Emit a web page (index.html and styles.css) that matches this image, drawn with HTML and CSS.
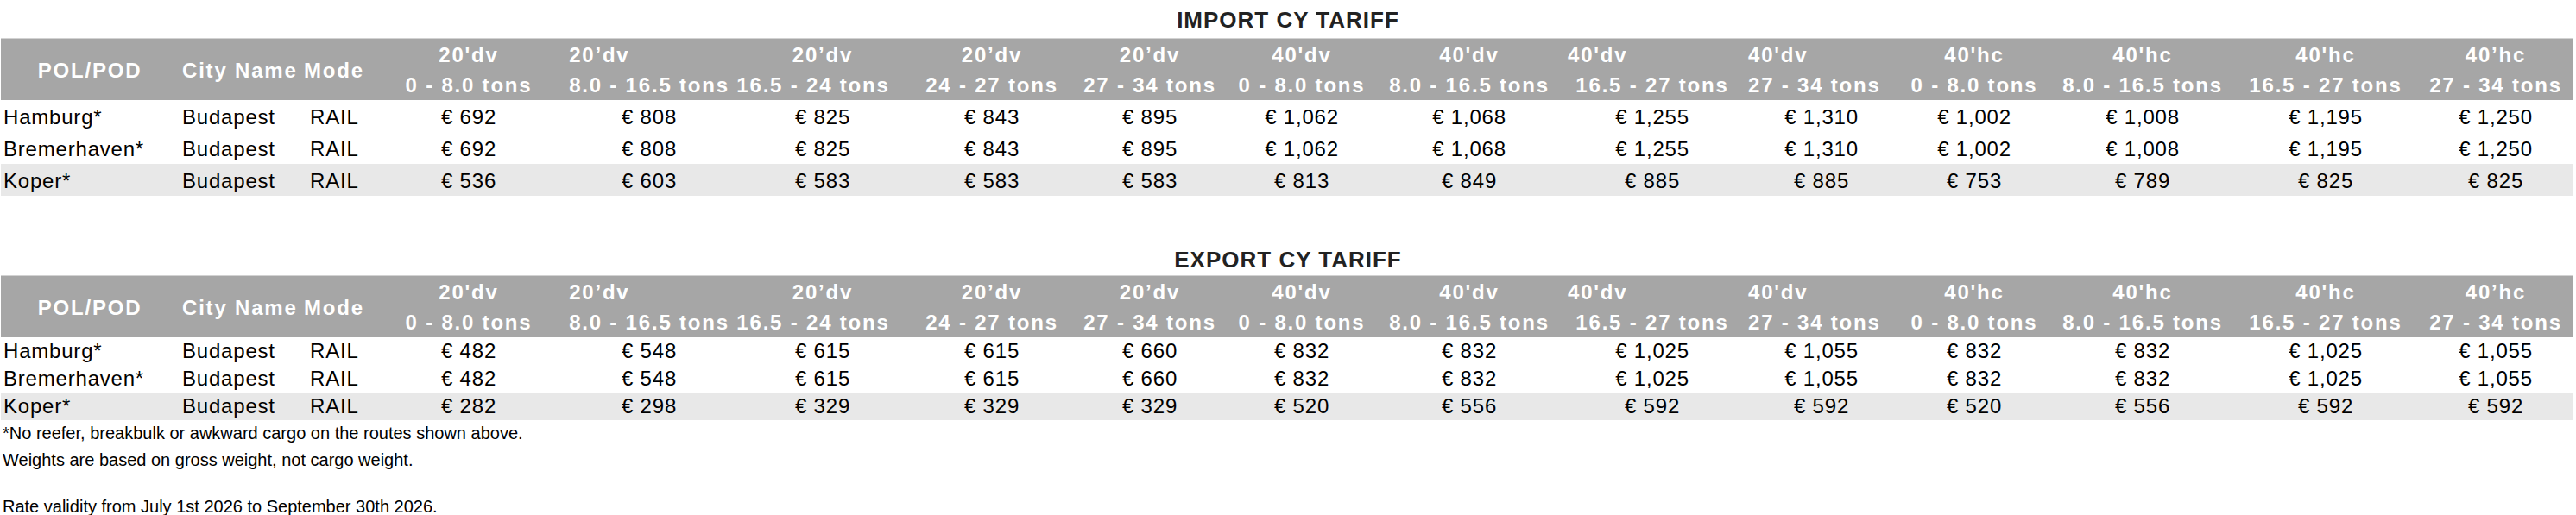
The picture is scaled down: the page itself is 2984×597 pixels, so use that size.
FILE: index.html
```html
<!DOCTYPE html>
<html lang="en">
<head>
<meta charset="utf-8">
<title>CY Tariff</title>
<link rel="stylesheet" href="styles.css">
</head>
<body>
<section class="tariff import">
  <h1 class="title">IMPORT CY TARIFF</h1>
  <table class="rates">
    <colgroup>
      <col class="c-port"><col class="c-city"><col class="c-mode">
      <col class="w212"><col class="w206"><col class="w196"><col class="w196"><col class="w170">
      <col class="w182"><col class="w206"><col class="w218"><col class="w174">
      <col class="w180"><col class="w210"><col class="w214"><col class="w180">
    </colgroup>
    <thead>
      <tr>
        <th class="single">POL/POD</th>
        <th class="single th-city">City Name</th>
        <th class="single th-mode">Mode</th>
        <th><span class="hl">20'dv</span><span class="hl">0 - 8.0 tons</span></th>
        <th><span class="stack"><span class="hl">20’dv</span><span class="hl">8.0 - 16.5 tons</span></span></th>
        <th><span class="hl">20’dv</span><span class="hl"><span class="nudge">16.5 - 24 tons</span></span></th>
        <th><span class="hl">20’dv</span><span class="hl">24 - 27 tons</span></th>
        <th><span class="hl">20’dv</span><span class="hl">27 - 34 tons</span></th>
        <th><span class="hl">40'dv</span><span class="hl">0 - 8.0 tons</span></th>
        <th><span class="hl">40'dv</span><span class="hl">8.0 - 16.5 tons</span></th>
        <th><span class="hl hl-left">40'dv</span><span class="hl">16.5 - 27 tons</span></th>
        <th class="th-left"><span class="hl">40'dv</span><span class="hl">27 - 34 tons</span></th>
        <th><span class="hl">40'hc</span><span class="hl">0 - 8.0 tons</span></th>
        <th><span class="hl">40'hc</span><span class="hl">8.0 - 16.5 tons</span></th>
        <th><span class="hl">40'hc</span><span class="hl">16.5 - 27 tons</span></th>
        <th><span class="hl">40’hc</span><span class="hl">27 - 34 tons</span></th>
      </tr>
    </thead>
    <tbody>
      <tr>
        <td class="port">Hamburg*</td><td class="city">Budapest</td><td class="mode">RAIL</td>
        <td>€ 692</td><td>€ 808</td><td>€ 825</td><td>€ 843</td><td>€ 895</td>
        <td>€ 1,062</td><td>€ 1,068</td><td>€ 1,255</td><td>€ 1,310</td>
        <td>€ 1,002</td><td>€ 1,008</td><td>€ 1,195</td><td>€ 1,250</td>
      </tr>
      <tr>
        <td class="port">Bremerhaven*</td><td class="city">Budapest</td><td class="mode">RAIL</td>
        <td>€ 692</td><td>€ 808</td><td>€ 825</td><td>€ 843</td><td>€ 895</td>
        <td>€ 1,062</td><td>€ 1,068</td><td>€ 1,255</td><td>€ 1,310</td>
        <td>€ 1,002</td><td>€ 1,008</td><td>€ 1,195</td><td>€ 1,250</td>
      </tr>
      <tr class="shade">
        <td class="port">Koper*</td><td class="city">Budapest</td><td class="mode">RAIL</td>
        <td>€ 536</td><td>€ 603</td><td>€ 583</td><td>€ 583</td><td>€ 583</td>
        <td>€ 813</td><td>€ 849</td><td>€ 885</td><td>€ 885</td>
        <td>€ 753</td><td>€ 789</td><td>€ 825</td><td>€ 825</td>
      </tr>
    </tbody>
  </table>
</section>

<section class="tariff export">
  <h1 class="title">EXPORT CY TARIFF</h1>
  <table class="rates">
    <colgroup>
      <col class="c-port"><col class="c-city"><col class="c-mode">
      <col class="w212"><col class="w206"><col class="w196"><col class="w196"><col class="w170">
      <col class="w182"><col class="w206"><col class="w218"><col class="w174">
      <col class="w180"><col class="w210"><col class="w214"><col class="w180">
    </colgroup>
    <thead>
      <tr>
        <th class="single">POL/POD</th>
        <th class="single th-city">City Name</th>
        <th class="single th-mode">Mode</th>
        <th><span class="hl">20'dv</span><span class="hl">0 - 8.0 tons</span></th>
        <th><span class="stack"><span class="hl">20’dv</span><span class="hl">8.0 - 16.5 tons</span></span></th>
        <th><span class="hl">20’dv</span><span class="hl"><span class="nudge">16.5 - 24 tons</span></span></th>
        <th><span class="hl">20’dv</span><span class="hl">24 - 27 tons</span></th>
        <th><span class="hl">20’dv</span><span class="hl">27 - 34 tons</span></th>
        <th><span class="hl">40'dv</span><span class="hl">0 - 8.0 tons</span></th>
        <th><span class="hl">40'dv</span><span class="hl">8.0 - 16.5 tons</span></th>
        <th><span class="hl hl-left">40'dv</span><span class="hl">16.5 - 27 tons</span></th>
        <th class="th-left"><span class="hl">40'dv</span><span class="hl">27 - 34 tons</span></th>
        <th><span class="hl">40'hc</span><span class="hl">0 - 8.0 tons</span></th>
        <th><span class="hl">40'hc</span><span class="hl">8.0 - 16.5 tons</span></th>
        <th><span class="hl">40'hc</span><span class="hl">16.5 - 27 tons</span></th>
        <th><span class="hl">40’hc</span><span class="hl">27 - 34 tons</span></th>
      </tr>
    </thead>
    <tbody>
      <tr>
        <td class="port">Hamburg*</td><td class="city">Budapest</td><td class="mode">RAIL</td>
        <td>€ 482</td><td>€ 548</td><td>€ 615</td><td>€ 615</td><td>€ 660</td>
        <td>€ 832</td><td>€ 832</td><td>€ 1,025</td><td>€ 1,055</td>
        <td>€ 832</td><td>€ 832</td><td>€ 1,025</td><td>€ 1,055</td>
      </tr>
      <tr>
        <td class="port">Bremerhaven*</td><td class="city">Budapest</td><td class="mode">RAIL</td>
        <td>€ 482</td><td>€ 548</td><td>€ 615</td><td>€ 615</td><td>€ 660</td>
        <td>€ 832</td><td>€ 832</td><td>€ 1,025</td><td>€ 1,055</td>
        <td>€ 832</td><td>€ 832</td><td>€ 1,025</td><td>€ 1,055</td>
      </tr>
      <tr class="shade">
        <td class="port">Koper*</td><td class="city">Budapest</td><td class="mode">RAIL</td>
        <td>€ 282</td><td>€ 298</td><td>€ 329</td><td>€ 329</td><td>€ 329</td>
        <td>€ 520</td><td>€ 556</td><td>€ 592</td><td>€ 592</td>
        <td>€ 520</td><td>€ 556</td><td>€ 592</td><td>€ 592</td>
      </tr>
    </tbody>
  </table>
</section>

<div class="notes">
  <p class="note">*No reefer, breakbulk or awkward cargo on the routes shown above.</p>
  <p class="note">Weights are based on gross weight, not cargo weight.</p>
  <p class="note note-gap">Rate validity from July 1st 2026 to September 30th 2026.</p>
</div>
</body>
</html>
```

FILE: styles.css
```css
html, body {
  margin: 0;
  padding: 0;
  background: #ffffff;
}

body {
  width: 2984px;
  font-family: "Liberation Sans", Arial, sans-serif;
  color: #000000;
}

.title {
  margin: 0;
  padding: 8px 0 6px;
  font-size: 26px;
  line-height: 30px;
  font-weight: bold;
  letter-spacing: 1px;
  color: #222222;
  text-align: center;
}

.export {
  margin-top: 51px;
}

.export .title {
  padding-bottom: 3px;
}

.rates {
  margin-left: 1px;
  width: 2980px;
  table-layout: fixed;
  border-collapse: collapse;
  border-spacing: 0;
}

.c-port { width: 206px; }
.c-city { width: 141px; }
.c-mode { width: 89px; }
.w170 { width: 170px; }
.w174 { width: 174px; }
.w180 { width: 180px; }
.w182 { width: 182px; }
.w196 { width: 196px; }
.w206 { width: 206px; }
.w210 { width: 210px; }
.w212 { width: 212px; }
.w214 { width: 214px; }
.w218 { width: 218px; }

.rates th {
  background: #a6a6a6;
  color: #ffffff;
  font-size: 24px;
  font-weight: bold;
  letter-spacing: 1.8px;
  line-height: 34.5px;
  text-align: center;
  vertical-align: top;
  white-space: nowrap;
  padding: 2px 0 0;
  border-top: 1px solid #d2d2d2;
  overflow: visible;
}

.rates th.single {
  padding-top: 20px;
}

.rates th.th-city,
.rates th.th-mode {
  text-align: left;
  padding-left: 4px;
}

.rates th.th-left {
  text-align: left;
  padding-left: 2px;
}

.hl {
  display: block;
}

.hl-left {
  text-align: left;
  padding-left: 11px;
}

.stack {
  display: inline-block;
  text-align: left;
}

.nudge {
  display: inline-block;
  margin-left: -22px;
}

.rates td {
  font-size: 24px;
  letter-spacing: 0.8px;
  text-align: center;
  white-space: nowrap;
  padding: 2px 0 0;
  line-height: 35px;
  vertical-align: top;
}

.export .rates td {
  padding-top: 0;
  line-height: 32px;
}

.rates td.port {
  text-align: left;
  padding-left: 3px;
}

.rates td.city {
  text-align: left;
  padding-left: 4px;
}

.rates td.mode {
  text-align: left;
  padding-left: 11px;
}

.shade td {
  background: #e8e8e8;
}

.notes {
  padding-left: 3px;
}

.note {
  margin: 0;
  font-size: 20px;
  line-height: 31px;
  white-space: nowrap;
}

.note-gap {
  margin-top: 23px;
}
```
